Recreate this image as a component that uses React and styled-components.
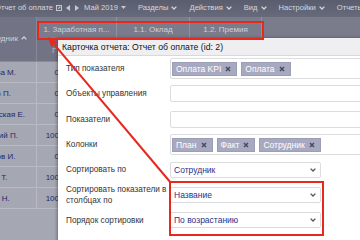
import React from 'react'
import styled, { createGlobalStyle } from 'styled-components'

const employees = [
  { name: 'Иванова М.', value: '0' },
  { name: 'Павлов П.', value: '0' },
  { name: 'Закревская Е.', value: '0' },
  { name: 'Бельский П.', value: '100' },
  { name: 'Морозов И.', value: '0' },
  { name: 'Козлов Т.', value: '100' },
  { name: 'Волков Н.', value: '100' },
]

const menus = ['Разделы', 'Действия', 'Вид', 'Настройки', 'Отчеты']

function Chevron({ up, color = 'currentColor' }) {
  return (
    <svg width="6" height="4" viewBox="0 0 6 4">
      <polyline
        points={up ? '0.6,3.4 3,1 5.4,3.4' : '0.6,0.6 3,3 5.4,0.6'}
        fill="none"
        stroke={color}
        strokeWidth="1.3"
      />
    </svg>
  )
}

function Cross() {
  return (
    <svg width="6" height="6" viewBox="0 0 6 6">
      <path d="M1 1L5 5M5 1L1 5" stroke="#4a4b5d" strokeWidth="1.5" />
    </svg>
  )
}

function App() {
  return (
    <>
      <GlobalStyle />
      <Screen>
        <Workspace>
          <Toolbar>
            <TitleGroup>
              <Title>Отчет об оплате</Title>
              <svg width="6" height="6" viewBox="0 0 6 6">
                <rect x="0.5" y="0.5" width="5" height="5" fill="none" stroke="#cfd0d8" strokeWidth="0.9" />
                <path d="M2 4L4 2M2.6 2H4V3.4" fill="none" stroke="#cfd0d8" strokeWidth="0.8" />
              </svg>
              <Arrows>
                <svg width="4" height="6" viewBox="0 0 4 6"><polygon points="4,0 0,3 4,6" fill="#c6c7d0" /></svg>
                <svg width="4" height="6" viewBox="0 0 4 6"><polygon points="0,0 4,3 0,6" fill="#c6c7d0" /></svg>
              </Arrows>
              <Period>
                Май 2019
                <svg width="5" height="3" viewBox="0 0 5 3"><polygon points="0,0 5,0 2.5,3" fill="#c6c7d0" /></svg>
              </Period>
            </TitleGroup>
            {menus.map((m) => (
              <Menu key={m}>
                {m}
                <Chevron />
              </Menu>
            ))}
          </Toolbar>

          <HeadRow>
            <NameHead>
              Сотрудник
              <Chevron up />
            </NameHead>
            <Groups>
              <Tabs>
                <Tab $w={80}>1. Заработная п...</Tab>
                <Tab $w={73}>1.1. Оклад</Tab>
                <Tab $w={72}>1.2. Премия</Tab>
              </Tabs>
              <SubHeads>
                <SubHead>Г</SubHead>
              </SubHeads>
            </Groups>
          </HeadRow>

          {employees.map((e) => (
            <Row key={e.name}>
              <NameCell>{e.name}</NameCell>
              <NumCell>{e.value}</NumCell>
            </Row>
          ))}
        </Workspace>

        <Dialog>
          <DialogHead>Карточка отчета: Отчет об оплате (id: 2)</DialogHead>
          <Form>
            <Label>Тип показателя</Label>
            <ChipField>
              <Chip>Оплата KPI<Cross /></Chip>
              <Chip>Оплата<Cross /></Chip>
            </ChipField>

            <Label>Объекты управления</Label>
            <TextField />

            <Label>Показатели</Label>
            <TextField />

            <Label>Колонки</Label>
            <ChipField>
              <Chip>План<Cross /></Chip>
              <Chip>Факт<Cross /></Chip>
              <Chip>Сотрудник<Cross /></Chip>
            </ChipField>

            <Label>Сортировать по</Label>
            <Select>
              Сотрудник
              <Chevron color="#555" />
            </Select>

            <Label>Сортировать показатели в столбцах по</Label>
            <Select>
              Название
              <Chevron color="#555" />
            </Select>

            <Label>Порядок сортировки</Label>
            <Select>
              По возрастанию
              <Chevron color="#555" />
            </Select>
          </Form>
        </Dialog>

        <Frame $x={37} $y={21} $w={227} $h={19} />
        <Frame $x={169} $y={181} $w={155} $h={55} />
        <Pointer width="360" height="240" viewBox="0 0 360 240">
          <line x1="171" y1="183" x2="54.4" y2="44.6" stroke="#e8271d" strokeWidth="2" />
          <polygon points="48,37 57.5,42 51.3,47.2" fill="#e8271d" />
        </Pointer>
      </Screen>
    </>
  )
}

export default App

const GlobalStyle = createGlobalStyle`
  html, body {
    margin: 0;
    padding: 0;
  }
  body {
    width: 360px;
    height: 240px;
    overflow: hidden;
    font-family: "Liberation Sans", Arial, sans-serif;
    font-size: 8px;
  }
`

const Screen = styled.div`
  position: relative;
  width: 360px;
  height: 240px;
  overflow: hidden;
  background: #a5a7b2;
`

const Workspace = styled.div`
  margin-left: -30px;
  width: 420px;
`

const Toolbar = styled.div`
  box-sizing: border-box;
  height: 17px;
  padding: 0 0 2px 25px;
  display: flex;
  align-items: center;
  gap: 12px;
  background: linear-gradient(#5a5d6d, #676a7a);
  color: #d6d7de;
  font-size: 7.6px;
  white-space: nowrap;
`

const TitleGroup = styled.div`
  display: flex;
  align-items: center;
  gap: 4px;
`

const Title = styled.span`
  margin-right: -1px;
`

const Arrows = styled.span`
  display: flex;
  gap: 5px;
  margin-right: 1px;
`

const Period = styled.span`
  display: flex;
  align-items: center;
  gap: 3px;
`

const Menu = styled.span`
  display: flex;
  align-items: center;
  gap: 3px;
`

const HeadRow = styled.div`
  display: flex;
  height: 45px;
  background: #727485;
  color: #cfd0d8;
  border-bottom: 1px solid #8a8c9a;
  box-sizing: border-box;
`

const NameHead = styled.div`
  width: 67px;
  display: flex;
  align-items: center;
  justify-content: center;
  gap: 3px;
  padding-bottom: 2px;
  box-sizing: border-box;
  border-right: 1px solid #868898;
`

const Groups = styled.div`
  flex: 1;
  display: flex;
  flex-direction: column;
`

const Tabs = styled.div`
  height: 22px;
  display: flex;
  background: #7a7c8c;
`

const Tab = styled.div`
  width: ${(p) => p.$w}px;
  box-sizing: border-box;
  padding-top: 3px;
  display: flex;
  align-items: center;
  justify-content: center;
  border-right: 1px solid #9092a1;
  white-space: nowrap;
  overflow: hidden;
`

const SubHeads = styled.div`
  flex: 1;
  display: flex;
  border-top: 1px solid #868898;
`

const SubHead = styled.div`
  width: 21px;
  box-sizing: border-box;
  padding: 6px 0 0 15px;
  overflow: hidden;
  white-space: nowrap;
  color: #b9bac4;
`

const Row = styled.div`
  display: flex;
  height: 21px;
  box-sizing: border-box;
  border-bottom: 1px solid #b8bac4;
  color: #242968;
`

const NameCell = styled.div`
  width: 67px;
  box-sizing: border-box;
  padding-left: 3px;
  display: flex;
  align-items: center;
  white-space: nowrap;
  border-right: 1px solid #b8bac4;
`

const NumCell = styled.div`
  width: 22px;
  display: flex;
  align-items: center;
  justify-content: flex-end;
`

const Dialog = styled.div`
  position: absolute;
  left: 58px;
  top: 38px;
  width: 320px;
  height: 220px;
  background: #fff;
  box-shadow: -1px 0 3px rgba(0, 0, 0, 0.35);
  font-size: 8.5px;
`

const DialogHead = styled.div`
  height: 18px;
  box-sizing: border-box;
  padding-left: 4px;
  display: flex;
  align-items: center;
  background: #efeff1;
  border-bottom: 1px solid #d9d9dc;
  color: #111;
  font-size: 8.7px;
`

const Form = styled.div`
  padding: 0 0 0 8px;
  display: grid;
  grid-template-columns: 104px 1fr;
  grid-auto-rows: 25.3px;
  align-items: center;
`

const Label = styled.div`
  color: #333;
  font-size: 8.2px;
  line-height: 11px;
`

const TextField = styled.div`
  width: 210px;
  height: 17px;
  box-sizing: border-box;
  border: 1px solid #dcdcdf;
  border-radius: 2px;
`

const ChipField = styled(TextField)`
  height: 21px;
  padding: 2px 1px;
  display: flex;
  align-items: center;
  gap: 4px;
`

const Chip = styled.span`
  height: 14px;
  padding: 0 5px 0 3px;
  display: flex;
  align-items: center;
  gap: 4px;
  background: #a7a9c1;
  border: 1px solid #9c9eb6;
  box-sizing: border-box;
  color: #fff;
  white-space: nowrap;
`

const Select = styled.div`
  width: 151px;
  height: 16px;
  box-sizing: border-box;
  padding: 0 4px 0 3px;
  display: flex;
  align-items: center;
  justify-content: space-between;
  border: 1px solid #dcdcdf;
  border-radius: 2px;
  color: #27318a;
`

const Frame = styled.div`
  position: absolute;
  left: ${(p) => p.$x}px;
  top: ${(p) => p.$y}px;
  width: ${(p) => p.$w}px;
  height: ${(p) => p.$h}px;
  box-sizing: border-box;
  border: 2px solid #e8271d;
`

const Pointer = styled.svg`
  position: absolute;
  left: 0;
  top: 0;
  pointer-events: none;
`
